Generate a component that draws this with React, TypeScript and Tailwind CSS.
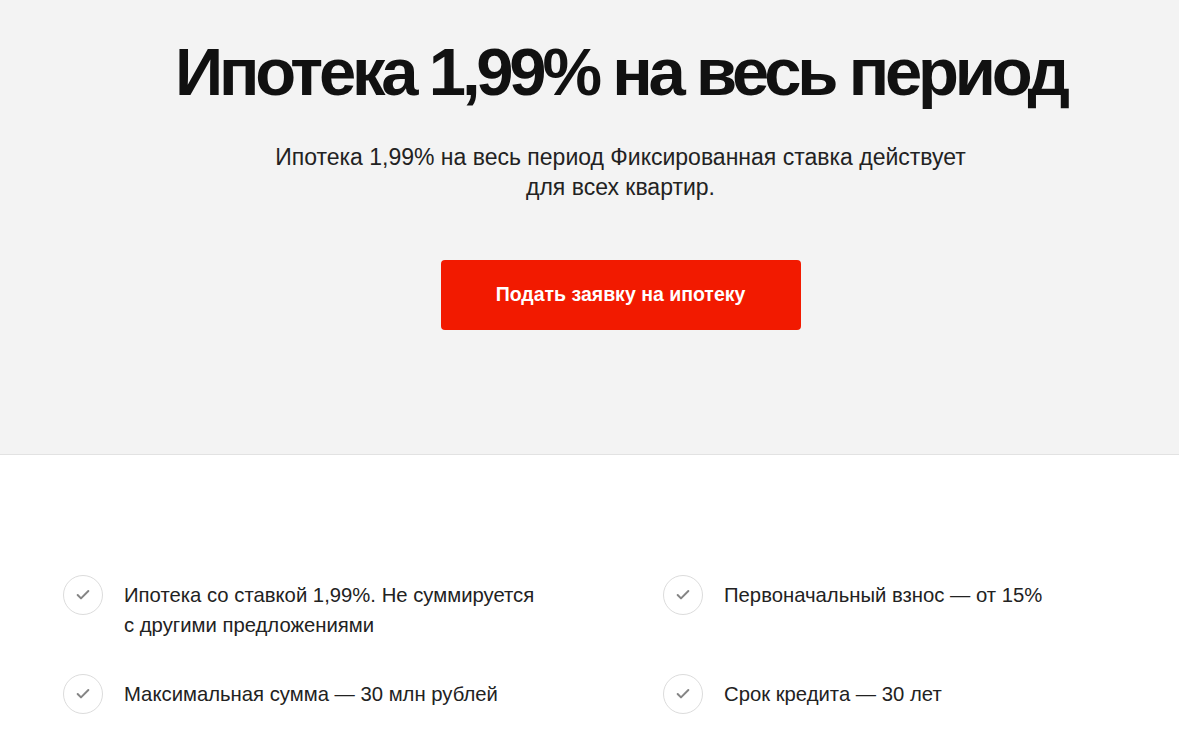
import { Check } from "lucide-react";

const features = [
    "Ипотека со ставкой 1,99%. Не суммируется с другими предложениями",
    "Первоначальный взнос — от 15%",
    "Максимальная сумма — 30 млн рублей",
    "Срок кредита — 30 лет",
];

export default function App() {
    return (
        <div className="min-h-screen bg-white text-[#222]" style={{ fontFamily: '"Liberation Sans", Arial, sans-serif' }}>
            {/* Hero */}
            <section className="h-[455px] bg-[#f3f3f3] border-b border-[#e2e2e2] flex flex-col items-center pt-[34px] pl-[62px]">
                <h1 className="text-[67px] leading-[76px] font-bold text-[#111] tracking-[-4.2px]">
                    Ипотека 1,99% на весь период
                </h1>
                <p className="mt-[32px] w-[720px] text-center text-[23px] leading-[30px] text-[#222]">
                    Ипотека 1,99% на весь период Фиксированная ставка действует для всех квартир.
                </p>
                <button className="mt-[58px] w-[360px] h-[70px] rounded-[4px] bg-[#f21a00] text-white text-[19.5px] font-bold">
                    Подать заявку на ипотеку
                </button>
            </section>

            {/* Features */}
            <section className="pt-[120px] pl-[63px]">
                <div className="grid grid-cols-[600px_516px] gap-y-[34px]">
                    {features.map((f) => (
                        <div key={f} className="flex items-start gap-[21px]">
                            <div className="w-[40px] h-[40px] shrink-0 rounded-full border border-[#dcdcdc] flex items-center justify-center">
                                <Check className="w-[16px] h-[16px] text-[#858585]" strokeWidth={3} />
                            </div>
                            <p className="w-[418px] pt-[5px] text-[20.3px] leading-[30px]">{f}</p>
                        </div>
                    ))}
                </div>
            </section>
        </div>
    );
}
